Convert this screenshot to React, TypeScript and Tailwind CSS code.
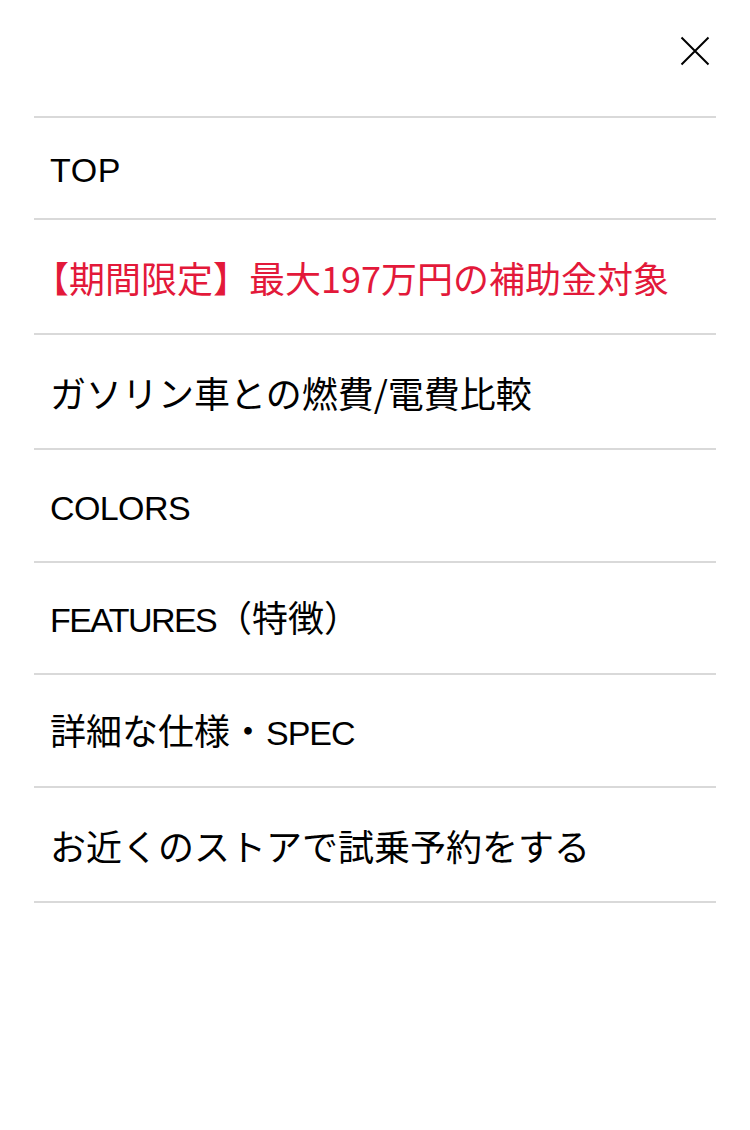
import React from "react";

type Part = { t: string; latin?: string };
type Item = { parts: Part[]; h: string; red?: boolean };

const items: Item[] = [
  { parts: [{ t: "TOP", latin: "tracking-[0.6px]" }], h: "h-[102px]" },
  {
    parts: [{ t: "【期間限定】最大197万円の補助金対象" }],
    h: "h-[115px]",
    red: true,
  },
  { parts: [{ t: "ガソリン車との燃費/電費比較" }], h: "h-[115px]" },
  { parts: [{ t: "COLORS", latin: "tracking-[-0.6px]" }], h: "h-[113px]" },
  {
    parts: [{ t: "FEATURES", latin: "tracking-[-1.6px]" }, { t: "（特徴）" }],
    h: "h-[112px]",
  },
  {
    parts: [{ t: "詳細な仕様・" }, { t: "SPEC", latin: "tracking-[-1px]" }],
    h: "h-[113px]",
  },
  { parts: [{ t: "お近くのストアで試乗予約をする" }], h: "h-[115px]" },
];

function CloseIcon() {
  return (
    <svg width="30" height="30" viewBox="0 0 30 30" fill="none">
      <path
        d="M1.5 1.5 L28.5 28.5 M28.5 1.5 L1.5 28.5"
        stroke="#000"
        strokeWidth="2"
        strokeLinecap="butt"
      />
    </svg>
  );
}

export default function App() {
  return (
    <div className="w-[750px] h-[1130px] bg-white font-['Noto_Sans_CJK_JP',sans-serif] text-black">
      <div className="px-[34px]">
        <div className="h-[116px] flex justify-end pt-[36px] pr-[6px]">
          <button className="w-[30px] h-[30px]" aria-label="close">
            <CloseIcon />
          </button>
        </div>
        <ul className="border-t-2 border-[#d9d9d9]">
          {items.map((it, i) => (
            <li
              key={i}
              className={`${it.h} border-b-2 border-[#d9d9d9] flex items-center pl-[16px] text-[36px] leading-[52px] ${
                it.red ? "text-[#e3193a]" : "text-black"
              }`}
            >
              <span className={it.red ? "-ml-[17px]" : ""}>
                {it.parts.map((p, j) =>
                  p.latin ? (
                    <span
                      key={j}
                      className={`font-['Liberation_Sans',Arial,sans-serif] text-[34px] ${p.latin}`}
                    >
                      {p.t}
                    </span>
                  ) : (
                    <span key={j}>{p.t}</span>
                  )
                )}
              </span>
            </li>
          ))}
        </ul>
      </div>
    </div>
  );
}
